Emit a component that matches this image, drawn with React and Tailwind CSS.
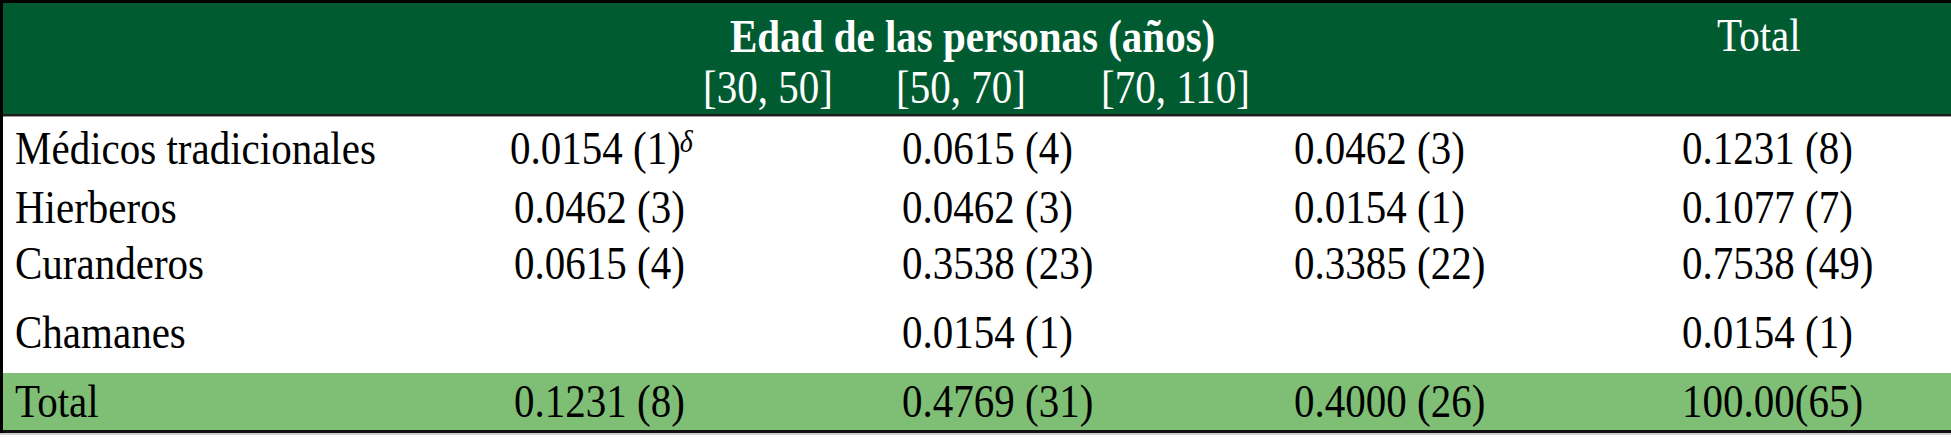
import React from "react";

const rows = [
  { label: "Médicos tradicionales", c1: "0.0154 (1)", sup: true, c2: "0.0615 (4)", c3: "0.0462 (3)", c4: "0.1231 (8)", h: "h-[62px]" },
  { label: "Hierberos", c1: "0.0462 (3)", c2: "0.0462 (3)", c3: "0.0154 (1)", c4: "0.1077 (7)", h: "h-[56px]" },
  { label: "Curanderos", c1: "0.0615 (4)", c2: "0.3538 (23)", c3: "0.3385 (22)", c4: "0.7538 (49)", h: "h-[56px]" },
  { label: "Chamanes", c1: "", c2: "0.0154 (1)", c3: "", c4: "0.0154 (1)", h: "h-[82px]" },
];

function T({ children, className = "" }) {
  return <span className={`inline-block scale-y-[1.13] whitespace-nowrap ${className}`}>{children}</span>;
}

function Row({ r, cls }) {
  return (
    <div className={`grid grid-cols-[511px_388px_392px_388px_1fr] items-center ${r.h} ${cls || ""}`}>
      <div className="pl-[12px]"><T>{r.label}</T></div>
      <div className={r.sup ? "-ml-[4px]" : ""}>
        {r.c1 && (
          <T>
            {r.c1}
            {r.sup && (
              <span className="italic text-[28px] relative -top-[10px] -ml-[1px]">δ</span>
            )}
          </T>
        )}
      </div>
      <div>{r.c2 && <T>{r.c2}</T>}</div>
      <div>{r.c3 && <T>{r.c3}</T>}</div>
      <div>{r.c4 && <T>{r.c4}</T>}</div>
    </div>
  );
}

export default function App() {
  return (
    <div
      className="w-[1951px] h-[437px] bg-white text-black text-[41px] leading-none overflow-hidden font-['Liberation_Serif','Times_New_Roman',serif]"
    >
      <div className="border-l-[3px] border-black">
        <div className="border-t-[3px] border-black bg-[#015b31] text-white h-[114px] flex">
          <div className="w-[1714px]">
            <div className="pt-[10px] pl-[727px] leading-[46px] font-bold">
              <T>Edad de las personas (años)</T>
            </div>
            <div className="mt-[5px] pl-[700px] leading-[46px] flex">
              <span className="w-[193px]"><T>[30, 50]</T></span>
              <span className="w-[205px]"><T>[50, 70]</T></span>
              <T>[70, 110]</T>
            </div>
          </div>
          <div className="pt-[9px] leading-[46px]"><T>Total</T></div>
        </div>
        <div className="h-[2px] bg-[#1c1c1c]" />
        <div className="h-[1px] bg-[#9a9a9a]" />
        {rows.map((r) => (
          <Row key={r.label} r={r} />
        ))}
        <Row
          r={{ label: "Total", c1: "0.1231 (8)", c2: "0.4769 (31)", c3: "0.4000 (26)", c4: "100.00(65)", h: "h-[57px]" }}
          cls="bg-[#7fbf75]"
        />
        <div className="h-[3px] bg-[#111]" />
      </div>
      <div className="h-[2px] bg-[#cfcfcf]" />
    </div>
  );
}
